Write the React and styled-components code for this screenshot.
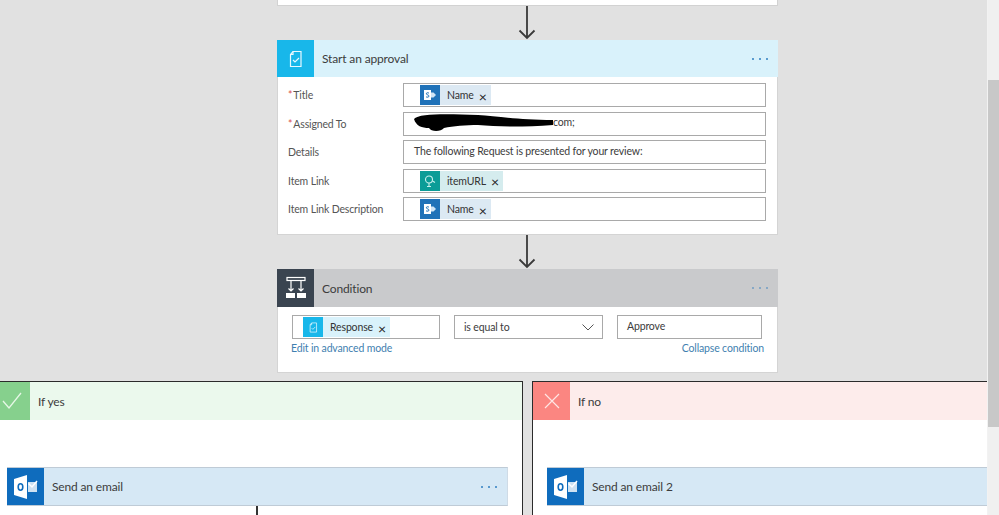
import React from 'react'
import styled, { createGlobalStyle } from 'styled-components'

const Global = createGlobalStyle`
  html, body { margin: 0; padding: 0; height: 100%; overflow: hidden; }
  body { font-family: Lato, "Open Sans", "Liberation Sans", sans-serif; color: #444; letter-spacing: -0.15px; }
`

const Page = styled.div`
  display: flex;
  width: 999px;
  height: 515px;
  overflow: hidden;
  background: #e1e1e1;
`

const Canvas = styled.div`
  flex: 1;
  min-width: 0;
  padding-left: 277px;
  overflow: hidden;
  border-right: 1px solid #f2f2f2;
`

const Column = styled.div`
  width: 501px;
  display: flex;
  flex-direction: column;
  align-items: center;
`

const Track = styled.div`
  width: 11px;
  height: 515px;
  padding-top: 80px;
  box-sizing: border-box;
  background: #f0f0f0;
`

const Thumb = styled.div`
  height: 347px;
  background: #c8c8c8;
`

const TopStub = styled.div`
  width: 100%;
  height: 6px;
  flex-shrink: 0;
  box-sizing: border-box;
  background: #fff;
  border: 1px solid #d2d2d2;
  border-top: none;
`

const Card = styled.div`
  width: 100%;
  flex-shrink: 0;
  background: #fff;
  box-shadow: inset 1px 0 #d4d4d4, inset -1px 0 #d4d4d4, inset 0 -1px #d4d4d4;
`

const Header = styled.div`
  display: flex;
  align-items: center;
  height: ${p => p.$h || 37}px;
  background: ${p => p.$bg};
  font-size: 12px;
  color: #3c3c3c;
`

const IconBox = styled.div`
  width: ${p => p.$w || 37}px;
  height: 100%;
  flex-shrink: 0;
  display: flex;
  align-items: center;
  justify-content: center;
  background: ${p => p.$bg};
  margin-right: 8px;
`

const HeaderTitle = styled.span`
  flex: 1;
`

const Dots = styled.div`
  display: flex;
  gap: 5px;
  margin-right: 10px;
  span {
    width: 2px;
    height: 2px;
    border-radius: 50%;
    background: ${p => p.$color || '#2f7fc1'};
  }
`

const FormBody = styled.div`
  display: flex;
  flex-direction: column;
  gap: 4.5px;
  padding: 6px 12px 14px 11px;
`

const Row = styled.div`
  display: flex;
  align-items: center;
  height: 24px;
`

const Label = styled.div`
  width: 115px;
  flex-shrink: 0;
  font-size: 10.5px;
  color: #555;
  em {
    color: #d9534f;
    font-style: normal;
    margin-right: 1px;
  }
`

const Field = styled.div`
  flex: 1;
  min-width: 0;
  height: 100%;
  display: flex;
  align-items: center;
  box-sizing: border-box;
  border: 1px solid #a9a9a9;
  padding-left: ${p => p.$pad ?? 10}px;
  padding-bottom: ${p => p.$lift || 0}px;
  background: #fff;
  font-size: 10.5px;
  color: #3c3c3c;
`

const Redacted = styled.svg`
  display: block;
  flex-shrink: 0;
`

const Chip = styled.div`
  display: flex;
  align-items: center;
  height: 20px;
  padding-right: 4px;
  background: ${p => p.$bg};
  font-size: 10.5px;
  color: #333;
`

const ChipIcon = styled.div`
  width: 20px;
  height: 20px;
  display: flex;
  align-items: center;
  justify-content: center;
  background: ${p => p.$bg};
  margin-right: 7px;
`

const ChipClose = styled.span`
  margin-left: 5px;
  font-size: 14px;
  line-height: 1;
  padding-top: 3px;
  color: #222;
`

const Arrow = styled.svg`
  display: block;
  flex-shrink: 0;
  margin-right: 1px;
`

const ConditionBody = styled.div`
  padding: 8px 14px 18px 14px;
`

const ConditionRow = styled.div`
  display: flex;
  gap: 14px;
  height: 24px;
  padding-left: 1px;
`

const ConditionField = styled(Field)`
  flex: none;
  width: ${p => p.$w}px;
  justify-content: ${p => p.$between ? 'space-between' : 'flex-start'};
`

const ChevronSlot = styled.span`
  display: flex;
  margin-right: 8px;
`

const Links = styled.div`
  display: flex;
  justify-content: space-between;
  margin-top: 2px;
  font-size: 10.5px;
  line-height: 14px;
  color: #3f7fb0;
`

const Branches = styled.div`
  display: flex;
  align-self: flex-start;
  gap: 9px;
  margin: 8px 0 0 -284px;
  flex-shrink: 0;
`

const Branch = styled.div`
  width: ${p => p.$w}px;
  height: 200px;
  box-sizing: border-box;
  background: #fff;
  border: 1px solid #2b2b2b;
  border-right: ${p => p.$open ? 'none' : '1px solid #2b2b2b'};
  border-bottom: none;
`

const BranchBody = styled.div`
  padding: 47px 0 0 ${p => p.$left}px;
`

const EmailCard = styled.div`
  width: 501px;
  box-sizing: border-box;
  border-top: 1px solid #bfcbd6;
  border-bottom: 1px solid #bfcbd6;
  border-right: 1px solid #cfdbe6;
`

const Tail = styled.div`
  width: 2px;
  height: 12px;
  background: #333;
  margin-left: 249px;
`

const ApprovalIcon = ({ size = 18 }) => (
  <svg width={size} height={size} viewBox="0 0 18 18" fill="none" stroke="#e8f8ff" strokeWidth="1.2">
    <path d="M6 1.5h8v15H3.5V4.5z" />
    <path d="M6 1.5v3H3.5" />
    <path d="M6 10l2 2 4-4" />
  </svg>
)

const SharePointIcon = () => (
  <svg width="14" height="14" viewBox="0 0 14 14">
    <rect x="1" y="2" width="7" height="10" fill="#fff" />
    <path d="M6 5.2C5 4.4 3 4.6 3.3 6c.3 1 2.6.8 2.7 2 .1 1.4-2 1.4-3 .8" fill="none" stroke="#2072b8" strokeWidth="1" />
    <path d="M8 4.5h2.5L13 7l-2.500 2.500H8z" fill="#cfe4f5" />
  </svg>
)

const LinkIcon = () => (
  <svg width="14" height="14" viewBox="0 0 14 14" fill="none" stroke="#c8f0ec" strokeWidth="1.100">
    <circle cx="6" cy="5.500" r="3.500" />
    <path d="M6 9v3M4 12.500h4M9.500 7l2.500 1.500" />
  </svg>
)

const ConditionIcon = () => (
  <svg width="22" height="24" viewBox="0 0 22 24" fill="none" stroke="#fff" strokeWidth="1.200">
    <rect x="2" y="1.500" width="18" height="3" />
    <path d="M6 4.500V15M16 4.500V15M3.500 12.500L6 15l2.500-2.500M13.500 12.500L16 15l2.500-2.500" />
    <rect x="1" y="17" width="9" height="5" fill="#fff" stroke="none" />
    <rect x="12" y="17" width="9" height="5" fill="#fff" stroke="none" />
  </svg>
)

const OutlookIcon = () => (
  <svg width="25" height="26" viewBox="0 0 25 26">
    <path d="M1 5L14 1v24L1 21z" fill="#fff" />
    <ellipse cx="7.500" cy="13" rx="2.300" ry="3.200" fill="none" stroke="#0f6cbd" strokeWidth="1.600" />
    <path d="M15 8h9v10h-9z" fill="#cfe2f2" />
    <path d="M15.500 9.500l3.500 3.500 5-6" fill="none" stroke="#fff" strokeWidth="1.500" />
  </svg>
)

const Check = () => (
  <svg width="20" height="18" viewBox="0 0 20 18" fill="none" stroke="#e6f7e6" strokeWidth="1.300">
    <path d="M1 9l6 7L19 1" />
  </svg>
)

const Cross = () => (
  <svg width="16" height="16" viewBox="0 0 16 16" fill="none" stroke="#ffe6e4" strokeWidth="1.200">
    <path d="M1 1l14 14M15 1L1 15" />
  </svg>
)

const Chevron = () => (
  <svg width="12" height="7" viewBox="0 0 12 7" fill="none" stroke="#555" strokeWidth="1">
    <path d="M.5.500L6 6l5.500-5.500" />
  </svg>
)

const DownArrow = () => (
  <Arrow width="18" height="34" viewBox="0 0 18 34" fill="none" stroke="#3a3a3a" strokeWidth="1.800">
    <path d="M9 0V32M1.500 24.500L9 32l7.500-7.500" />
  </Arrow>
)

const MoreDots = ({ color }) => (
  <Dots $color={color}><span /><span /><span /></Dots>
)

const NameChip = () => (
  <Chip $bg="#dce9f3">
    <ChipIcon $bg="#2072b8"><SharePointIcon /></ChipIcon>
    Name<ChipClose>×</ChipClose>
  </Chip>
)

const EmailStep = ({ title, dots }) => (
  <EmailCard>
    <Header $bg="#d6e8f5" $h={37}>
      <IconBox $bg="#0f6cbd"><OutlookIcon /></IconBox>
      <HeaderTitle>{title}</HeaderTitle>
      {dots && <MoreDots color="#2f7fc1" />}
    </Header>
  </EmailCard>
)

export default function App() {
  return (
    <Page>
      <Global />
      <Canvas>
        <Column>
          <TopStub />
          <DownArrow />
          <Card>
            <Header $bg="#d9f2fb">
              <IconBox $bg="#18b7ea"><ApprovalIcon /></IconBox>
              <HeaderTitle>Start an approval</HeaderTitle>
              <MoreDots />
            </Header>
            <FormBody>
              <Row>
                <Label><em>*</em>Title</Label>
                <Field $pad={16}><NameChip /></Field>
              </Row>
              <Row>
                <Label><em>*</em>Assigned To</Label>
                <Field $lift={3}>
                  <Redacted width="139" height="17" viewBox="0 0 139 17">
                    <path d="M0 5C5-1 35 0 64 1c18 1 40 5 75 5v5c-28 2-55 2-75 0-12 0-25 1-34 3-3 4-13 4-15 0C8 14 2 12 0 5z" fill="#000" />
                  </Redacted>
                  com;
                </Field>
              </Row>
              <Row>
                <Label>Details</Label>
                <Field $lift={3}>The following Request is presented for your review:</Field>
              </Row>
              <Row>
                <Label>Item Link</Label>
                <Field $pad={16}>
                  <Chip $bg="#d5ecee">
                    <ChipIcon $bg="#0b9c97"><LinkIcon /></ChipIcon>
                    itemURL<ChipClose>×</ChipClose>
                  </Chip>
                </Field>
              </Row>
              <Row>
                <Label>Item Link Description</Label>
                <Field $pad={16}><NameChip /></Field>
              </Row>
            </FormBody>
          </Card>
          <DownArrow />
          <Card>
            <Header $bg="#c9cacc" $h={38}>
              <IconBox $bg="#3a4450"><ConditionIcon /></IconBox>
              <HeaderTitle>Condition</HeaderTitle>
              <MoreDots color="#6f9cc4" />
            </Header>
            <ConditionBody>
              <ConditionRow>
                <ConditionField $w={148} $pad={10}>
                  <Chip $bg="#d9f2fb">
                    <ChipIcon $bg="#18b7ea"><ApprovalIcon size={11} /></ChipIcon>
                    Response<ChipClose>×</ChipClose>
                  </Chip>
                </ConditionField>
                <ConditionField $w={149} $pad={9} $between>
                  is equal to
                  <ChevronSlot><Chevron /></ChevronSlot>
                </ConditionField>
                <ConditionField $w={145} $pad={9} $lift={3}>Approve</ConditionField>
              </ConditionRow>
              <Links>
                <span>Edit in advanced mode</span>
                <span>Collapse condition</span>
              </Links>
            </ConditionBody>
          </Card>
          <Branches>
            <Branch $w={530}>
              <Header $bg="#ebf9ed" $h={38}>
                <IconBox $bg="#86d08d" $w={36}><Check /></IconBox>
                <HeaderTitle>If yes</HeaderTitle>
              </Header>
              <BranchBody $left={13}>
                <EmailStep title="Send an email" dots />
                <Tail />
              </BranchBody>
            </Branch>
            <Branch $w={460} $open>
              <Header $bg="#fdeceb" $h={38}>
                <IconBox $bg="#fb8681" $w={37}><Cross /></IconBox>
                <HeaderTitle>If no</HeaderTitle>
              </Header>
              <BranchBody $left={14}>
                <EmailStep title="Send an email 2" />
              </BranchBody>
            </Branch>
          </Branches>
        </Column>
      </Canvas>
      <Track><Thumb /></Track>
    </Page>
  )
}
